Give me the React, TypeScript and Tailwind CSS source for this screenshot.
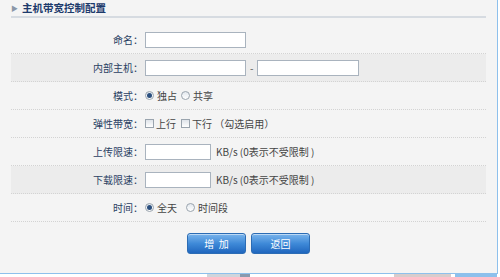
import React from "react";

const font = { fontFamily: '"Noto Sans CJK SC", "Noto Sans", sans-serif' };

function Row({ label, shaded, children }: { label: string; shaded?: boolean; children: React.ReactNode }) {
  return (
    <div className={`flex h-[28px] items-center border-b border-dotted border-[#d3d3d3] ${shaded ? "bg-[#ececec]" : ""}`}>
      <div className="w-[132px] shrink-0 text-right text-[10px] text-[#2a3f63]">{label}：</div>
      <div className="ml-[2px] flex items-center text-[10px] text-[#444]">{children}</div>
    </div>
  );
}

function Input({ w }: { w: string }) {
  return <div className={`h-[16px] ${w} border border-[#a9b3be] bg-white`} />;
}

function Radio({ checked }: { checked?: boolean }) {
  return (
    <span className="flex h-[9px] w-[9px] shrink-0 items-center justify-center rounded-full border border-[#9aa4ae] bg-gradient-to-b from-[#e3e8ee] to-white">
      {checked && <span className="h-[5px] w-[5px] rounded-full bg-[#2b4f7e]" />}
    </span>
  );
}

function Check() {
  return <span className="block h-[9px] w-[9px] shrink-0 border border-[#9aa4ae] bg-gradient-to-b from-[#dfe4ea] to-white" />;
}

function Btn({ children }: { children: React.ReactNode }) {
  return (
    <div className="flex h-[21px] w-[59px] items-center justify-center rounded-[3px] border border-[#2c6cb4] bg-gradient-to-b from-[#79b4ec] via-[#3f8ad8] to-[#1f66be] text-[10px] text-white shadow-[inset_0_1px_0_rgba(255,255,255,0.5)]">
      {children}
    </div>
  );
}

export default function App() {
  return (
    <div className="relative h-[277px] w-[500px] overflow-hidden bg-white" style={font}>
      <div className="h-[274px] w-[498px] border-b border-r border-[#8dc0ec] bg-[#f4f4f4]">
        <div className="ml-[11px] w-[475px]">
          <div className="flex h-[18px] items-center border-b-2 border-[#d6dbe1]">
            <span className="mr-[4px] text-[7px] text-[#8a97a8]">▶</span>
            <span className="text-[10.5px] font-bold text-[#1d3b6c]">主机带宽控制配置</span>
          </div>
          <div className="mt-[8px]">
            <Row label="命名">
              <Input w="w-[101px]" />
            </Row>
            <Row label="内部主机" shaded>
              <Input w="w-[101px]" />
              <span className="mx-[4px] text-[#555]">-</span>
              <Input w="w-[102px]" />
            </Row>
            <Row label="模式">
              <Radio checked />
              <span className="ml-[3px]">独占</span>
              <span className="ml-[4px]"><Radio /></span>
              <span className="ml-[3px]">共享</span>
            </Row>
            <Row label="弹性带宽">
              <Check />
              <span className="ml-[2px]">上行</span>
              <span className="ml-[5px]"><Check /></span>
              <span className="ml-[2px]">下行 （勾选启用）</span>
            </Row>
            <Row label="上传限速">
              <Input w="w-[66px]" />
              <span className="ml-[5px]">KB/s (0表示不受限制 )</span>
            </Row>
            <Row label="下载限速" shaded>
              <Input w="w-[66px]" />
              <span className="ml-[5px]">KB/s (0表示不受限制 )</span>
            </Row>
            <Row label="时间">
              <Radio checked />
              <span className="ml-[3px]">全天</span>
              <span className="ml-[9px]"><Radio /></span>
              <span className="ml-[3px]">时间段</span>
            </Row>
          </div>
          <div className="mt-[11px] flex gap-[5px] pl-[176px]">
            <Btn>增&nbsp;&nbsp;加</Btn>
            <Btn>返回</Btn>
          </div>
        </div>
      </div>
      <div className="flex h-[3px] w-[500px]">
        <div className="w-[207px]" />
        <div className="w-[33px] bg-[#cfd5dc]" />
        <div className="w-[10px] bg-[#8a9aae]" />
        <div className="w-[144px]" />
        <div className="w-[57px] bg-[#d8cccc]" />
        <div className="w-[4px]" />
        <div className="w-[42px] bg-[#8dc0ec]" />
      </div>
    </div>
  );
}
